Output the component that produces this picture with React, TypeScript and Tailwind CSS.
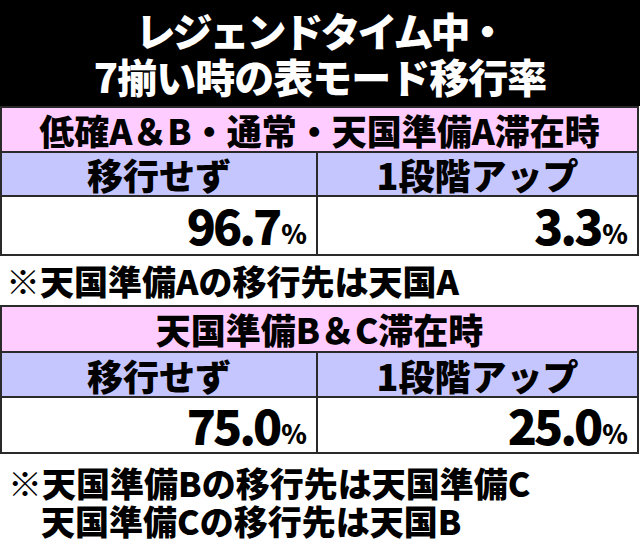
import React from "react";

const FONT = { fontFamily: '"Noto Sans CJK JP", "Noto Sans", sans-serif' };

function Pct({ v }: { v: string }) {
  return (
    <div className="h-full flex items-end justify-end pr-[9px] pb-[4px]">
      <span className="text-[48px] leading-[52px] font-black tracking-[-3px] mr-[2px]">{v}</span>
      <span className="text-[26px] leading-[34px] font-black">%</span>
    </div>
  );
}

function Table({ title, a, b, h }: { title: string; a: string; b: string; h: { p: number; q: number; r: number } }) {
  return (
    <div className="w-[639px] border-2 border-[#2a2a2a] text-black">
      <div
        className="bg-[#ffccff] flex items-center justify-center text-[35px] leading-[40px] font-black border-b-2 border-[#2a2a2a]"
        style={{ height: h.p }}
      >
        {title}
      </div>
      <div className="grid grid-cols-[316px_1fr] bg-[#c6c6ff] border-b-2 border-[#2a2a2a]" style={{ height: h.q }}>
        <div className="flex items-center justify-center text-[36px] leading-[40px] font-black border-r-2 border-[#2a2a2a]">移行せず</div>
        <div className="flex items-center justify-center text-[36px] leading-[40px] font-black">1段階アップ</div>
      </div>
      <div className="grid grid-cols-[316px_1fr] bg-white" style={{ height: h.r }}>
        <div className="border-r-2 border-[#2a2a2a]">
          <Pct v={a} />
        </div>
        <div>
          <Pct v={b} />
        </div>
      </div>
    </div>
  );
}

export default function App() {
  return (
    <div className="w-[640px] h-[546px] bg-white overflow-hidden" style={FONT}>
      <div className="bg-black h-[106px] flex flex-col items-center justify-center text-white font-black">
        <div className="text-[40px] leading-[46px] tracking-[-3px]">レジェンドタイム中・</div>
        <div className="text-[40px] leading-[46px] tracking-[-1px]">7揃い時の表モード移行率</div>
      </div>
      <Table title="低確A＆B・通常・天国準備A滞在時" a="96.7" b="3.3" h={{ p: 45, q: 44, r: 57 }} />
      <div className="h-[49px] flex items-center pl-[6px] text-[34px] leading-[40px] font-black">
        ※天国準備Aの移行先は天国A
      </div>
      <Table title="天国準備B＆C滞在時" a="75.0" b="25.0" h={{ p: 46, q: 45, r: 54 }} />
      <div className="pl-[8px] pt-[10px] text-[34px] leading-[38px] font-black">
        <div>※天国準備Bの移行先は天国準備C</div>
        <div className="pl-[33px]">天国準備Cの移行先は天国B</div>
      </div>
    </div>
  );
}
